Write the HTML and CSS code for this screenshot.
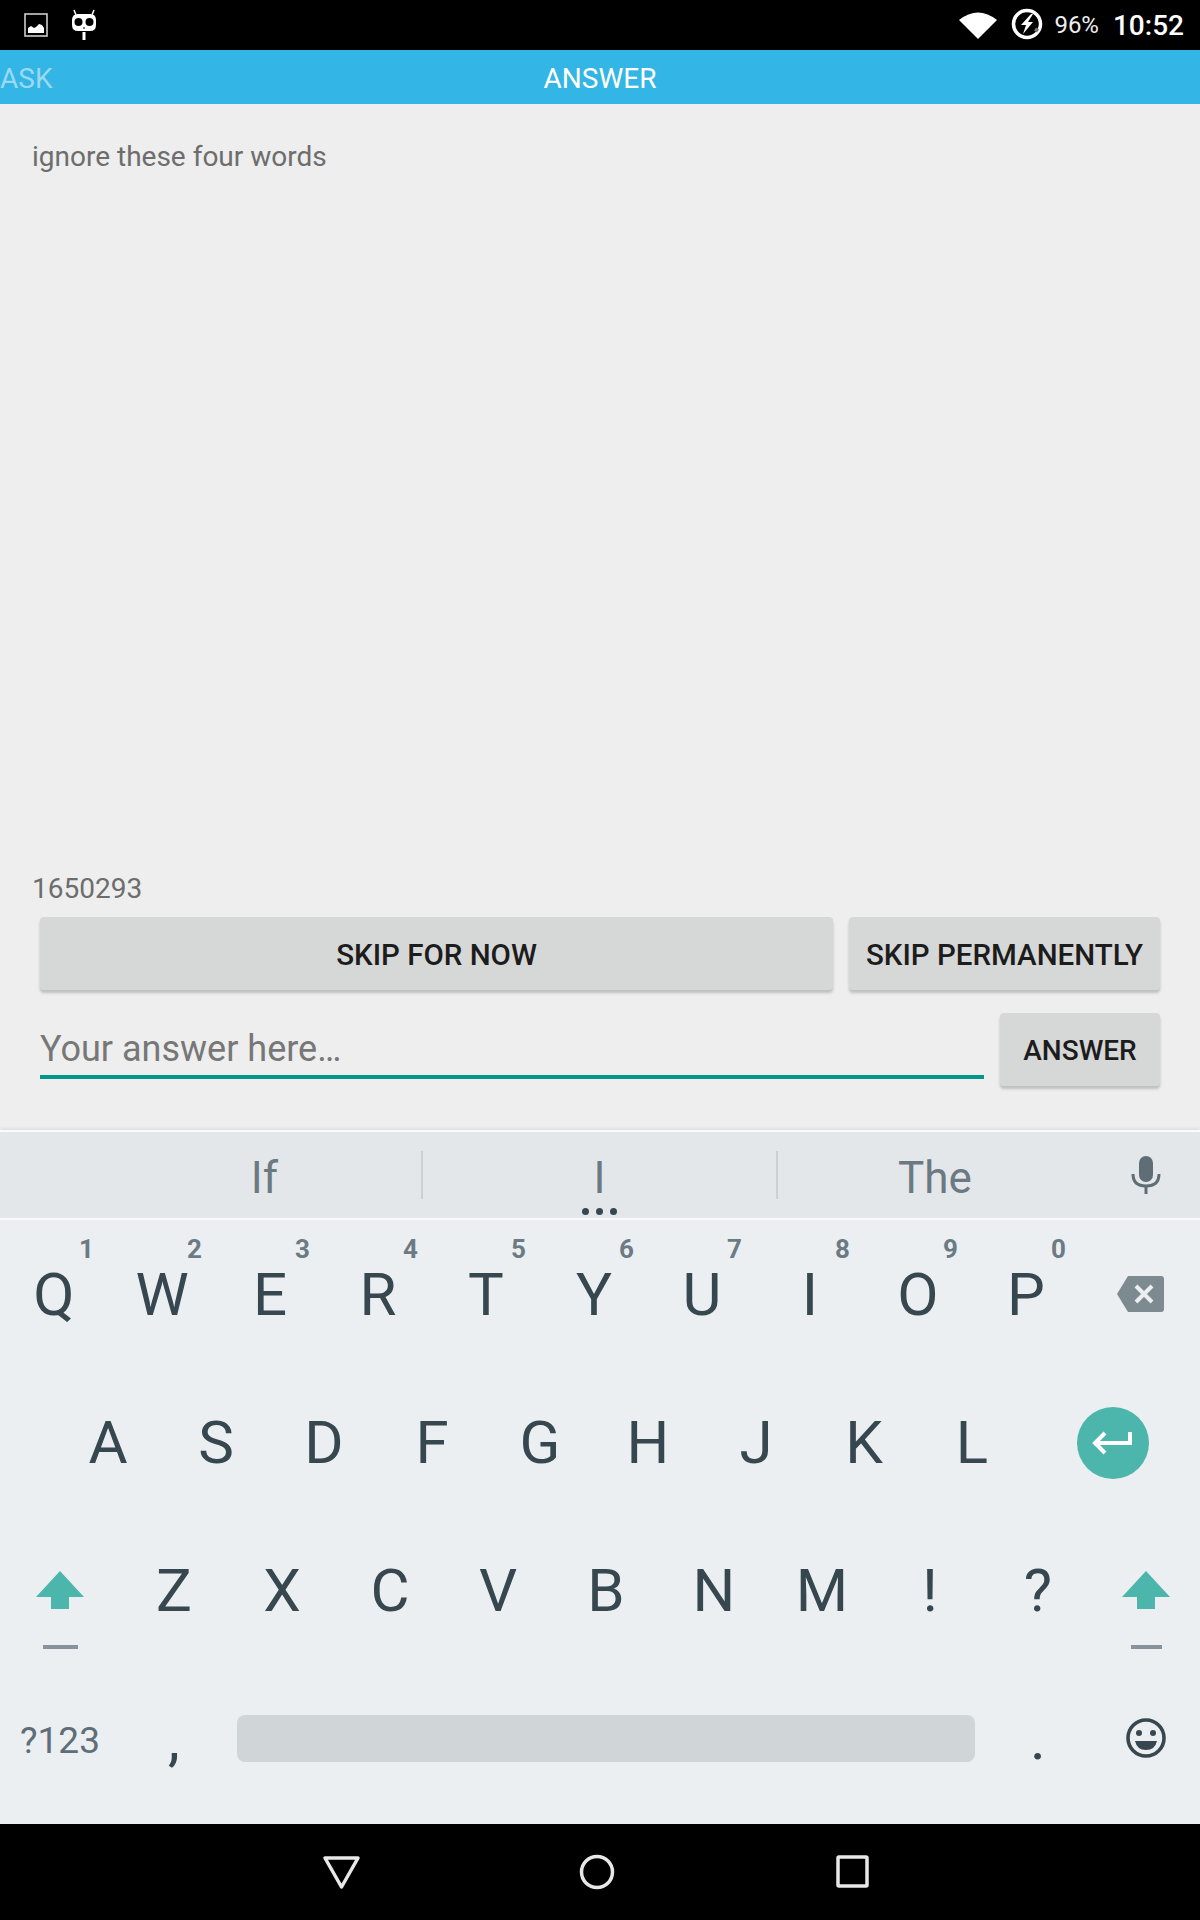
FILE: index.html
```html
<!DOCTYPE html>
<html>
<head>
    <title>Answer</title>
    <link rel="stylesheet" href="styles.css">
</head>
<body>
<div id="screen">
    <div class="status-bar">
        <div class="status-left">
            <svg width="24" height="24" viewBox="0 0 24 24"><rect x="1" y="1" width="22" height="22" fill="none" stroke="#ccc" stroke-width="1.6"/><path d="M4 20v-5l3-2 3 2 2-1 3-3 3 1 2 3 0 5z" fill="#fff"/></svg>
            <svg width="26" height="32" viewBox="0 0 26 32"><path d="M5 6L3 1M21 6l2-5" stroke="#fff" stroke-width="1.500"/><path d="M1 11q0-6 6-6h12q6 0 6 6v5q0 6-6 6H7q-6 0-6-6z" fill="#fff"/><circle cx="7.500" cy="13" r="4" fill="#000"/><circle cx="18.500" cy="13" r="4" fill="#000"/><rect x="12" y="18.500" width="2" height="1" fill="#000"/><rect x="11.500" y="23" width="3" height="8" fill="#fff"/></svg>
        </div>
        <div class="status-right">
            <svg class="wifi" width="38" height="28" viewBox="0 0 38 28"><path d="M0 9Q19-6 38 9L19 28z" fill="#fff"/></svg>
            <svg class="battery" width="32" height="32" viewBox="0 0 32 32"><circle cx="16" cy="16" r="13.500" fill="none" stroke="#fff" stroke-width="3.500"/><path d="M27 23l-3-2" stroke="#777" stroke-width="3.500"/><path d="M20 6l-10 11h5l-3 9 10-12h-5l5-8z" fill="#fff"/></svg>
            <span class="battery-text">96%</span>
            <span class="clock">10:52</span>
        </div>
    </div>

    <div class="tabs">
        <span class="tab tab-off">ASK</span>
        <span class="tab">ANSWER</span>
        <span></span>
    </div>

    <div class="content">
        <p class="question">ignore these four words</p>
        <p class="question-id">1650293</p>
        <div class="button-row skip-row">
            <button class="btn btn-wide">SKIP FOR NOW</button>
            <button class="btn btn-skip">SKIP PERMANENTLY</button>
        </div>
        <div class="button-row answer-row">
            <div class="answer-input">Your answer here…</div>
            <button class="btn btn-answer">ANSWER</button>
        </div>
    </div>

    <div class="keyboard">
        <div class="suggestions">
            <span class="word word-first">If</span>
            <span class="word word-mid">I<i class="dots"><b></b><b></b><b></b></i></span>
            <span class="word word-last">The</span>
            <span class="mic">
                <svg width="30" height="38" viewBox="0 0 30 38"><rect x="8" y="0" width="14" height="26" rx="7" fill="#5f6e76"/><path d="M2 18q0 12 13 12t13-12" fill="none" stroke="#5f6e76" stroke-width="3"/><rect x="13.500" y="29" width="3" height="9" fill="#5f6e76"/></svg>
            </span>
        </div>

        <div class="key-row">
            <span class="key">Q<sup class="hint">1</sup></span>
            <span class="key">W<sup class="hint">2</sup></span>
            <span class="key">E<sup class="hint">3</sup></span>
            <span class="key">R<sup class="hint">4</sup></span>
            <span class="key">T<sup class="hint">5</sup></span>
            <span class="key">Y<sup class="hint">6</sup></span>
            <span class="key">U<sup class="hint">7</sup></span>
            <span class="key">I<sup class="hint">8</sup></span>
            <span class="key">O<sup class="hint">9</sup></span>
            <span class="key">P<sup class="hint">0</sup></span>
            <span class="key key-rest">
                <svg width="48" height="36" viewBox="0 0 48 36"><path d="M12 0h33q3 0 3 3v30q0 3-3 3H12L1 18z" fill="#7d8a90"/><path d="M20 10l16 16M36 10L20 26" stroke="#ebeff2" stroke-width="4"/></svg>
            </span>
        </div>

        <div class="key-row row-home">
            <span class="key">A</span>
            <span class="key">S</span>
            <span class="key">D</span>
            <span class="key">F</span>
            <span class="key">G</span>
            <span class="key">H</span>
            <span class="key">J</span>
            <span class="key">K</span>
            <span class="key">L</span>
            <span class="key key-rest">
                <svg class="enter" width="72" height="72" viewBox="0 0 72 72"><circle cx="36" cy="36" r="36" fill="#4db6ac"/><path d="M53 25v11H19M28 26L18 36l10 10" fill="none" stroke="#fff" stroke-width="4"/></svg>
            </span>
        </div>

        <div class="key-row">
            <span class="key key-side">
                <svg class="shift" width="48" height="80" viewBox="0 0 48 80"><path d="M24 0l24 26H33v12H15V26H0z" fill="#4db6ac"/><rect x="7" y="74" width="35" height="4" fill="#87929a"/></svg>
            </span>
            <span class="key">Z</span>
            <span class="key">X</span>
            <span class="key">C</span>
            <span class="key">V</span>
            <span class="key">B</span>
            <span class="key">N</span>
            <span class="key">M</span>
            <span class="key">!</span>
            <span class="key">?</span>
            <span class="key key-rest">
                <svg class="shift" width="48" height="80" viewBox="0 0 48 80"><path d="M24 0l24 26H33v12H15V26H0z" fill="#4db6ac"/><rect x="9" y="74" width="31" height="4" fill="#87929a"/></svg>
            </span>
        </div>

        <div class="key-row">
            <span class="key key-side key-symbols">?123</span>
            <span class="key">,</span>
            <span class="space-cell"><span class="space-bar"></span></span>
            <span class="key">.</span>
            <span class="key key-rest">
                <svg width="40" height="40" viewBox="0 0 40 40"><circle cx="20" cy="20" r="18" fill="none" stroke="#37474f" stroke-width="3.600"/><circle cx="13" cy="15" r="3" fill="#37474f"/><circle cx="27" cy="15" r="3" fill="#37474f"/><path d="M9 23h22q-2 9-11 9t-11-9z" fill="#37474f"/></svg>
            </span>
        </div>
    </div>

    <div class="nav-bar">
        <svg width="40" height="36" viewBox="0 0 40 36"><path d="M3 4h33L19.500 33z" fill="none" stroke="#e8e8e8" stroke-width="3.500" stroke-linejoin="round"/></svg>
        <svg width="40" height="36" viewBox="0 0 40 36"><circle cx="20" cy="18" r="15.500" fill="none" stroke="#e8e8e8" stroke-width="3.500"/></svg>
        <svg width="40" height="36" viewBox="0 0 40 36"><rect x="6" y="3" width="29" height="29" rx="1" fill="none" stroke="#e8e8e8" stroke-width="3.500"/></svg>
    </div>
</div>
</body>
</html>
```

FILE: styles.css
```css
html, body {
    margin: 0;
    padding: 0;
}

body {
    font-family: Roboto, "Liberation Sans", sans-serif;
    background-color: #000;
}

#screen {
    display: flex;
    flex-direction: column;
    width: 1200px;
    height: 1920px;
    overflow: hidden;
}

svg {
    display: block;
}

/* status bar */
.status-bar {
    display: flex;
    justify-content: space-between;
    align-items: center;
    height: 50px;
    flex: none;
    padding: 0 16px 0 24px;
    background-color: #000;
    color: #fff;
}

.status-left {
    display: flex;
    align-items: center;
    gap: 23px;
}

.status-right {
    display: flex;
    align-items: center;
}

.battery {
    margin-left: 14px;
    margin-top: -2px;
}

.battery-text {
    margin-left: 11px;
    font-size: 24px;
    color: #eee;
}

.clock {
    margin-left: 14px;
    font-size: 28px;
    font-weight: 500;
}

/* tabs */
.tabs {
    display: grid;
    grid-template-columns: 1fr auto 1fr;
    align-items: center;
    height: 54px;
    flex: none;
    padding-top: 2px;
    box-sizing: border-box;
    background-color: #33b5e5;
}

.tab {
    font-size: 28px;
    color: #fff;
}

.tab-off {
    color: #99daf2;
}

/* question area */
.content {
    display: flex;
    flex-direction: column;
    flex: 1;
    padding: 0 40px;
    background-color: #eee;
}

.question {
    flex: 1;
    margin: 36px 0 0 -8px;
    font-size: 28px;
    color: #6d6d6d;
}

.question-id {
    margin: 0 0 12px -8px;
    font-size: 28px;
    color: #6d6d6d;
}

.button-row {
    display: flex;
    width: 1120px;
}

.skip-row {
    gap: 16px;
    margin-bottom: 23px;
}

.answer-row {
    gap: 16px;
    margin-bottom: 44px;
}

.btn {
    height: 73px;
    padding: 2px 0 0;
    border: none;
    border-radius: 4px;
    background-color: #d6d7d7;
    box-shadow: 0 3px 3px rgba(0, 0, 0, 0.2);
    font-family: inherit;
    font-size: 28px;
    font-weight: 500;
    color: #1c1c1c;
}

.btn-wide {
    flex: 1;
    font-size: 29.500px;
}

.btn-skip {
    width: 311px;
    font-size: 29.500px;
}

.btn-answer {
    width: 160px;
}

.answer-input {
    flex: 1;
    height: 62px;
    border-bottom: 4px solid #009688;
    font-size: 36px;
    line-height: 72px;
    color: #777;
}

/* keyboard */
.keyboard {
    position: relative;
    height: 694px;
    flex: none;
    background-color: #ebeff2;
    border-top: 2px solid #fafafa;
    box-shadow: 0 -2px 3px rgba(0, 0, 0, 0.06);
    box-sizing: border-box;
}

.suggestions {
    display: flex;
    align-items: center;
    height: 86px;
    border-bottom: 2px solid #fafafa;
    background-color: #e3e7ea;
    font-size: 44px;
    color: #6b7a82;
}

.word {
    display: block;
    position: relative;
    height: 48px;
    line-height: 54px;
    text-align: center;
}

.word-first {
    width: 313px;
    margin-left: 108px;
    border-right: 2px solid #ccd1d4;
}

.word-mid {
    width: 353px;
    border-right: 2px solid #ccd1d4;
}

.word-last {
    width: 314px;
}

.dots {
    display: flex;
    justify-content: center;
    gap: 7px;
    position: absolute;
    left: 0;
    right: 0;
    bottom: -16px;
}

.dots b {
    width: 7px;
    height: 7px;
    border-radius: 50%;
    background-color: #37474f;
}

.mic {
    display: flex;
    justify-content: center;
    flex: 1;
}

.key-row {
    display: flex;
    height: 148px;
}

.row-home {
    padding-left: 54px;
}

.key {
    display: flex;
    justify-content: center;
    align-items: center;
    position: relative;
    width: 108px;
    flex: none;
    font-size: 60px;
    color: #37474f;
}

.key-rest {
    flex: 1;
    width: auto;
}

.key-side {
    width: 120px;
}

.key-symbols {
    padding-top: 4px;
    box-sizing: border-box;
    font-size: 37px;
    color: #5f6e76;
}

.hint {
    position: absolute;
    top: 14px;
    right: 14px;
    font-size: 26px;
    font-weight: 700;
    line-height: 30px;
    color: #6c7b83;
}

.enter {
    margin-top: 2px;
}

.shift {
    margin-top: 42px;
}

.space-cell {
    display: flex;
    align-items: center;
    justify-content: center;
    width: 756px;
    flex: none;
}

.space-bar {
    width: 738px;
    height: 47px;
    border-radius: 8px;
    background-color: #d0d5d8;
}

/* nav bar */
.nav-bar {
    display: flex;
    justify-content: center;
    align-items: center;
    gap: 215px;
    height: 96px;
    flex: none;
    padding-right: 6px;
    background-color: #000;
}
```
